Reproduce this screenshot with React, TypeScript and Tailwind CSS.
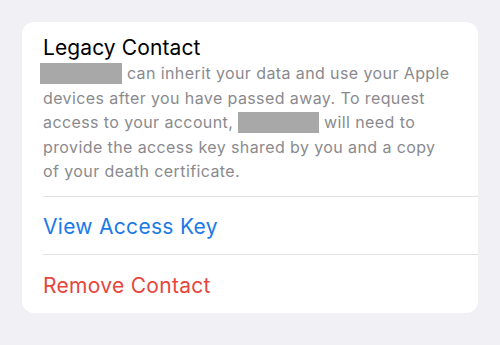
export default function App() {
  return (
    <div
      className="w-[500px] h-[345px] bg-[#f0f0f5] pt-[22px] pl-[22px] pr-[22px]"
      style={{ fontFamily: "Inter, 'Liberation Sans', sans-serif" }}
    >
      <div className="w-[456px] bg-white rounded-[12px] overflow-hidden">
        <div className="pl-[21px] pr-[22px] pt-[13px] pb-[12px]">
          <h2 className="text-[21px] leading-[26px] text-black tracking-[0.1px]">
            Legacy Contact
          </h2>
          <p className="text-[16px] leading-[24.5px] text-[#8a8a8e] tracking-[0.4px]">
            <span className="inline-block w-[82px] h-[21px] bg-[#a8a8a8] align-[-5px] -ml-[3px]" />{" "}
            can inherit your data and use your Apple devices after you have
            passed away. To request access to your account,{" "}
            <span className="inline-block w-[81px] h-[21px] bg-[#a8a8a8] align-[-5px]" />{" "}
            will need to provide the access key shared by you and a copy of your
            death certificate.
          </p>
        </div>
        <div className="ml-[21px] border-t border-[#e2e2e4]">
          <button className="h-[57px] pt-[3px] w-full text-left text-[21px] text-[#1a7ae8] tracking-[0.3px]">
            View Access Key
          </button>
        </div>
        <div className="ml-[21px] border-t border-[#e2e2e4]">
          <button className="h-[58px] pt-[4px] w-full text-left text-[21px] text-[#e8453c] tracking-[0.3px]">
            Remove Contact
          </button>
        </div>
      </div>
    </div>
  );
}
